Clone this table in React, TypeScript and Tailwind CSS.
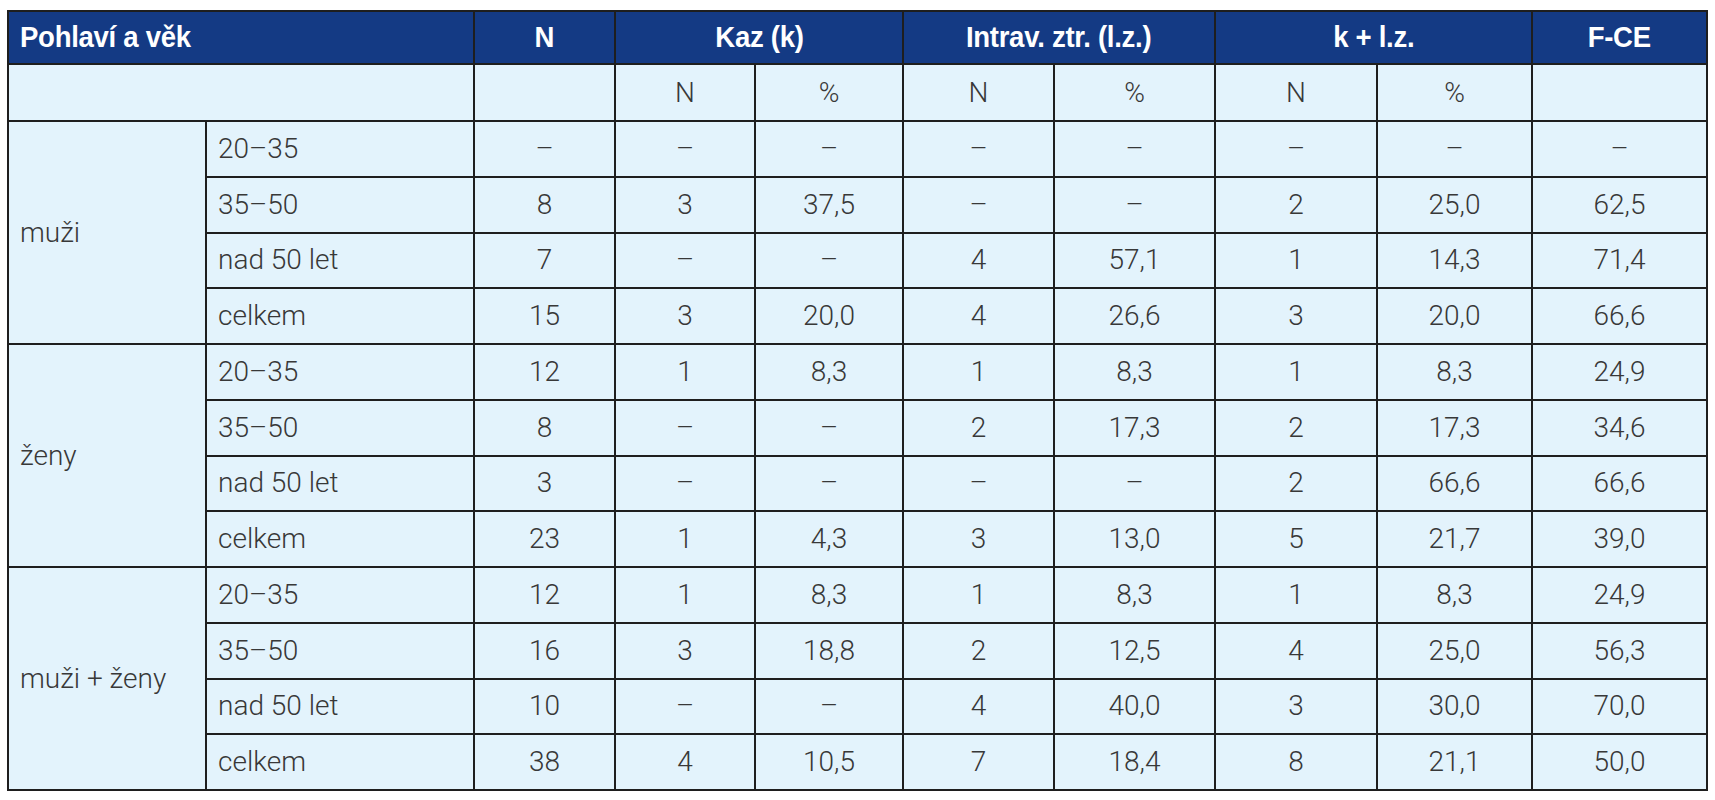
import React from "react";

const D = "\u2013";

type Group = { label: string; rows: string[][] };

const groups: Group[] = [
  {
    label: "muži",
    rows: [
      ["20–35", D, D, D, D, D, D, D, D],
      ["35–50", "8", "3", "37,5", D, D, "2", "25,0", "62,5"],
      ["nad 50 let", "7", D, D, "4", "57,1", "1", "14,3", "71,4"],
      ["celkem", "15", "3", "20,0", "4", "26,6", "3", "20,0", "66,6"],
    ],
  },
  {
    label: "ženy",
    rows: [
      ["20–35", "12", "1", "8,3", "1", "8,3", "1", "8,3", "24,9"],
      ["35–50", "8", D, D, "2", "17,3", "2", "17,3", "34,6"],
      ["nad 50 let", "3", D, D, D, D, "2", "66,6", "66,6"],
      ["celkem", "23", "1", "4,3", "3", "13,0", "5", "21,7", "39,0"],
    ],
  },
  {
    label: "muži + ženy",
    rows: [
      ["20–35", "12", "1", "8,3", "1", "8,3", "1", "8,3", "24,9"],
      ["35–50", "16", "3", "18,8", "2", "12,5", "4", "25,0", "56,3"],
      ["nad 50 let", "10", D, D, "4", "40,0", "3", "30,0", "70,0"],
      ["celkem", "38", "4", "10,5", "7", "18,4", "8", "21,1", "50,0"],
    ],
  },
];

const widths = [198, 268, 141, 140, 148, 151, 161, 162, 155, 175];

const hd =
  "border-2 border-[#1e1e1e] text-white font-bold text-[29px] tracking-[-0.3px] [font-family:'Liberation_Sans',Arial,sans-serif]";
const bd =
  "border-2 border-[#1e1e1e] text-[#383838] text-[28px] font-light [font-family:Roboto,'Liberation_Sans',sans-serif]";

function H({ children, left }: { children: React.ReactNode; left?: boolean }) {
  return (
    <span className={`inline-block scale-x-[0.95] ${left ? "origin-left" : "origin-center"}`}>{children}</span>
  );
}

export default function App() {
  return (
    <div className="w-[1715px] h-[800px] bg-white pt-[10px] pl-[7px]">
      <table className="border-collapse table-fixed bg-[#e3f3fc] border-2 border-[#3a3a3a]" style={{ width: 1701 }}>
        <colgroup>
          {widths.map((w, i) => (
            <col key={i} style={{ width: w }} />
          ))}
        </colgroup>
        <thead>
          <tr className="h-[53px] bg-[#143a84]">
            <th colSpan={2} className={`${hd} text-left pl-[11px]`}>
              <H left>Pohlaví a věk</H>
            </th>
            <th className={`${hd} text-center`}>
              <H>N</H>
            </th>
            <th colSpan={2} className={`${hd} text-center`}>
              <H>Kaz (k)</H>
            </th>
            <th colSpan={2} className={`${hd} text-center`}>
              <H>Intrav. ztr. (l.z.)</H>
            </th>
            <th colSpan={2} className={`${hd} text-center`}>
              <H>k + l.z.</H>
            </th>
            <th className={`${hd} text-center`}>
              <H>F-CE</H>
            </th>
          </tr>
        </thead>
        <tbody>
          <tr className="h-[57px]">
            <td colSpan={2} className={bd}></td>
            <td className={bd}></td>
            <td className={`${bd} text-center`}>N</td>
            <td className={`${bd} text-center`}>%</td>
            <td className={`${bd} text-center`}>N</td>
            <td className={`${bd} text-center`}>%</td>
            <td className={`${bd} text-center`}>N</td>
            <td className={`${bd} text-center`}>%</td>
            <td className={bd}></td>
          </tr>
          {groups.map((g) =>
            g.rows.map((r, ri) => (
              <tr key={g.label + ri} className="h-[55.75px]">
                {ri === 0 && (
                  <td rowSpan={4} className={`${bd} text-left pl-[11px]`}>
                    {g.label}
                  </td>
                )}
                <td className={`${bd} text-left pl-[11px]`}>{r[0]}</td>
                {r.slice(1).map((c, ci) => (
                  <td key={ci} className={`${bd} text-center`}>
                    {c}
                  </td>
                ))}
              </tr>
            ))
          )}
        </tbody>
      </table>
    </div>
  );
}
